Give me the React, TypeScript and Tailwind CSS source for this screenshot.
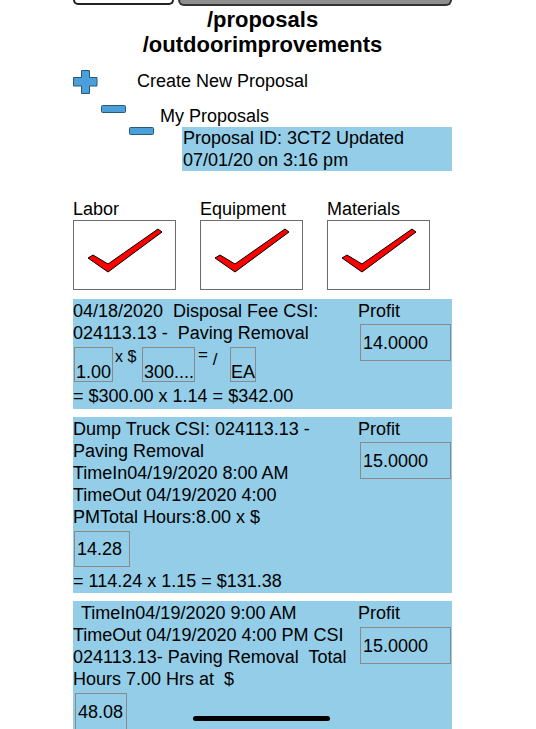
import React from 'react'

function PlusIcon() {
    return (
        <svg width="25" height="24" viewBox="0 0 25 24" className="shrink-0">
            <path d="M8.5 0.5 H16.5 V7.5 H24 V16 H16.5 V23.5 H8.5 V16 H0.5 V7.5 H8.5 Z" fill="#4ba0da" stroke="#2b5877" strokeWidth="1" />
        </svg>
    )
}

function MinusIcon() {
    return (
        <svg width="25" height="8" viewBox="0 0 25 8" className="shrink-0">
            <rect x="0.5" y="0.5" width="24" height="7" rx="1" fill="#4ba0da" stroke="#2b5877" strokeWidth="1" />
        </svg>
    )
}

function CheckBox({ label }: { label: string }) {
    return (
        <div className="w-[103px]">
            <div>{label}</div>
            <div className="h-[70px] w-[103px] border border-[#6b6b6b] bg-white">
                <svg width="101" height="68" viewBox="1 1 101 68">
                    <polygon points="15,38 20,35 35,44 85,9 89,12 35,52" fill="#ff0000" stroke="#000" strokeWidth="1" strokeLinejoin="miter" />
                </svg>
            </div>
        </div>
    )
}

function Field({ w, h, children, bottom, pad = 'pl-[2px]' }: { w: string; h: string; children: React.ReactNode; bottom?: boolean; pad?: string }) {
    return (
        <div className={`${w} ${h} flex shrink-0 border border-[#8a8a8a] ${pad} ${bottom ? 'items-end leading-[18px]' : 'items-center'}`}>
            {children}
        </div>
    )
}

function Profit({ value, gap }: { value: string; gap: string }) {
    return (
        <div className="flex-1">
            <div>Profit</div>
            <div className={`ml-[2px] ${gap} flex h-[37px] w-[91px] items-center border border-[#8a8a8a] pl-[2px]`}>{value}</div>
        </div>
    )
}

export default function App() {
    return (
        <div className="relative min-h-[729px] w-[536px] overflow-hidden bg-white font-['Liberation_Sans',Arial,sans-serif] text-[18px] leading-[22px] text-black">
            <div className="ml-[73px] w-[379px]">
                {/* top buttons (cut off) */}
                <div className="flex gap-[4px]">
                    <div className="h-[5px] w-[101px] rounded-b-[6px] border-2 border-t-0 border-[#222]" />
                    <div className="h-[6px] flex-1 rounded-b-[6px] border-2 border-t-0 border-[#333] bg-[#8f8f8f]" />
                </div>

                <h1 className="mt-[1px] text-center text-[22px] font-bold leading-[25px]">
                    /proposals
                    <br />
                    /outdoorimprovements
                </h1>

                <div className="mt-[13px] flex items-start">
                    <PlusIcon />
                    <span className="ml-[39px]">Create New Proposal</span>
                </div>
                <div className="mt-[11px] flex items-start pl-[28px]">
                    <MinusIcon />
                    <span className="ml-[34px]">My Proposals</span>
                </div>
                <div className="flex items-start pl-[56px]">
                    <MinusIcon />
                    <div className="ml-[28px] h-[44px] flex-1 bg-[#93cde7] pl-[1px]">
                        Proposal ID: 3CT2 Updated
                        <br />
                        07/01/20 on 3:16 pm
                    </div>
                </div>

                <div className="mt-[27px] flex gap-[24px]">
                    <CheckBox label="Labor" />
                    <CheckBox label="Equipment" />
                    <CheckBox label="Materials" />
                </div>

                {/* card 1 */}
                <div className="mt-[9px] flex bg-[#93cde7] pb-[2px] pt-[1px]">
                    <div className="w-[285px] whitespace-pre">
                        <div>04/18/2020  Disposal Fee CSI:</div>
                        <div>024113.13 -  Paving Removal</div>
                        <div className="mt-[3px] flex h-[35px] items-start pl-[1px]">
                            <Field w="w-[39px]" h="h-[35px]" bottom pad="pl-[1px]">1.00</Field>
                            <span className="w-[29px] pl-[2px] pt-[2px] text-[16px] leading-[16px]">x $</span>
                            <Field w="w-[53px]" h="h-[35px]" bottom pad="pl-[1px]">300....</Field>
                            <span className="w-[35px] pl-[3px] text-[17px] leading-[16px]">
                                = <span className="relative top-[5px]">/</span>
                            </span>
                            <Field w="w-[26px]" h="h-[35px]" bottom pad="pl-0">EA</Field>
                        </div>
                        <div className="mt-[3px]">= $300.00 x 1.14 = $342.00</div>
                    </div>
                    <Profit value="14.0000" gap="mt-[2px]" />
                </div>

                {/* card 2 */}
                <div className="mt-[8px] flex bg-[#93cde7] pb-[1px] pt-[1px]">
                    <div className="w-[285px] whitespace-pre">
                        <div>Dump Truck CSI: 024113.13 -</div>
                        <div>Paving Removal</div>
                        <div>TimeIn04/19/2020 8:00 AM</div>
                        <div>TimeOut 04/19/2020 4:00</div>
                        <div>PMTotal Hours:8.00 x $</div>
                        <div className="ml-[1px] mt-[3px]">
                            <Field w="w-[56px]" h="h-[36px]">14.28</Field>
                        </div>
                        <div className="mt-[3px]">= 114.24 x 1.15 = $131.38</div>
                    </div>
                    <Profit value="15.0000" gap="mt-[2px]" />
                </div>

                {/* card 3 */}
                <div className="mt-[8px] flex bg-[#93cde7] pt-[1px]">
                    <div className="w-[285px] whitespace-pre">
                        <div className="pl-[8px]">TimeIn04/19/2020 9:00 AM</div>
                        <div>TimeOut 04/19/2020 4:00 PM CSI</div>
                        <div>024113.13- Paving Removal  Total</div>
                        <div>Hours 7.00 Hrs at  $</div>
                        <div className="ml-[2px] mt-[3px]">
                            <Field w="w-[52px]" h="h-[37px]">48.08</Field>
                        </div>
                    </div>
                    <Profit value="15.0000" gap="mt-[3px]" />
                </div>
            </div>

            {/* home indicator */}
            <div className="absolute left-[193px] top-[716px] h-[5px] w-[137px] rounded-full bg-black" />
        </div>
    )
}
